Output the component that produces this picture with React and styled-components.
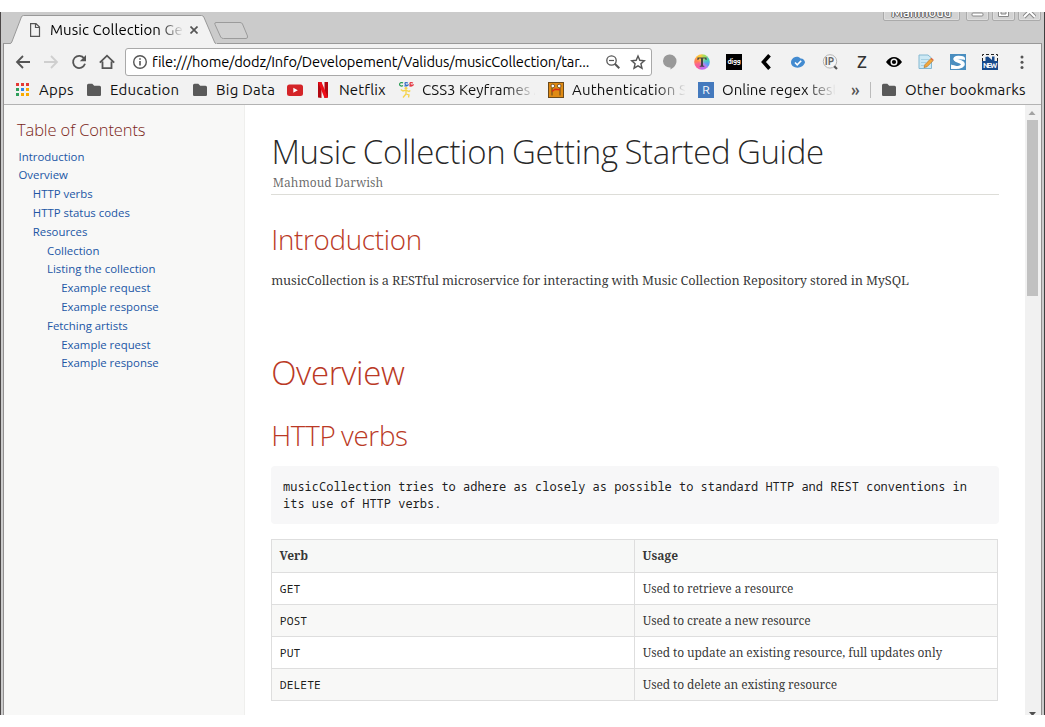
import React from "react";
import styled, { createGlobalStyle, css } from "styled-components";

const GlobalStyle = createGlobalStyle`
  *, *::before, *::after { box-sizing: border-box; }
  html, body { margin: 0; background: #fff; }
  h1, h2, h3, p, ul, pre { margin: 0; padding: 0; font-weight: inherit; }
`;

const ui = `"Ubuntu", "Noto Sans", sans-serif`;
const heading = `"Open Sans", "Noto Sans", sans-serif`;
const serif = `"Noto Serif", "DejaVu Serif", serif`;
const mono = `"Noto Sans Mono", "DejaVu Sans Mono", monospace`;

/* ---------- window ---------- */

const Screen = styled.div`
  width: 1045px;
  height: 727px;
  padding: 12px 0;
  overflow: hidden;
  background: #fff;
`;

const Window = styled.div`
  display: flex;
  flex-direction: column;
  height: 703px;
  overflow: hidden;
  background: #cbcbcb;
  border-left: 1px solid #4b4747;
  border-right: 1px solid #3f3f3f;
`;

const TabStrip = styled.header`
  display: flex;
  flex: none;
  height: 31px;
  padding: 0 4px 0 9px;
`;

const Tab = styled.div`
  position: relative;
  display: flex;
  align-items: center;
  width: 206px;
  height: 31px;
  padding: 4px 0 0 18px;
`;

const TabShape = styled.svg`
  position: absolute;
  left: 0;
  top: 0;
`;

const TabContent = styled.div`
  position: relative;
  display: flex;
  align-items: center;
`;

const TabTitle = styled.span`
  width: 133px;
  margin-left: 9px;
  overflow: hidden;
  white-space: nowrap;
  font: 15px/20px ${ui};
  letter-spacing: 0.05px;
  color: #000;
  mask-image: linear-gradient(to right, #000 108px, transparent 134px);
`;

const NewTab = styled.svg`
  margin: 9px 0 0 -3px;
`;

const WindowButtons = styled.div`
  display: flex;
  align-items: flex-start;
  gap: 4px;
  margin-left: auto;
  margin-top: -6px;
`;

const WindowButton = styled.div`
  display: flex;
  justify-content: center;
  align-items: center;
  width: ${(p) => (p.$wide ? 77 : 23)}px;
  margin-right: ${(p) => (p.$wide ? 2 : -1)}px;
  height: 15px;
  border: 1px solid #aaa;
  border-radius: 2px;
  background: #d3d3d3;
  box-shadow: inset 0 0 0 1px #dedede;
`;

const UserName = styled.span`
  font: 500 13px/13px ${ui};
  letter-spacing: 0;
  margin-top: -2px;
  color: #fff;
  text-shadow: 1px 0 #666, -1px 0 #666, 0 1px #666, 0 -1px #666;
`;

const Frame = styled.div`
  display: flex;
  flex-direction: column;
  flex: 1;
  min-height: 0;
  margin: 0 2px;
  border: 1px solid #929090;
  border-top-color: #999;
  border-bottom: 0;
  background: #f2f2f2;
`;

/* ---------- toolbar ---------- */

const Toolbar = styled.div`
  display: flex;
  align-items: center;
  flex: none;
  height: 36px;
  padding: 0 9px 0 11px;
`;

const NavButtons = styled.div`
  display: flex;
  gap: 12px;
  width: 110px;
`;

const AddressBar = styled.div`
  display: flex;
  align-items: center;
  width: 527px;
  height: 28px;
  padding: 0 5px 0 6px;
  border: 1px solid #a9a9a9;
  border-radius: 3px;
  background: #fff;
`;

const Url = styled.span`
  flex: 1;
  min-width: 0;
  margin-left: 4px;
  white-space: nowrap;
  font: 14.67px/20px ${ui};
  letter-spacing: -0.17px;
  color: #000;
`;

const AddressActions = styled.div`
  display: flex;
  gap: 9px;
`;

const Extensions = styled.div`
  display: flex;
  gap: 16px;
  margin-left: 10px;
`;

const Digg = styled.div`
  width: 16px;
  height: 16px;
  background: #000;
  color: #fff;
  text-align: center;
  font: 700 7px/14px ${ui};
  letter-spacing: -0.3px;
`;

const LetterZ = styled.div`
  width: 16px;
  height: 16px;
  text-align: center;
  color: #333;
  font: 500 17px/16px ${ui};
`;

/* ---------- bookmarks ---------- */

const Bookmarks = styled.nav`
  display: flex;
  align-items: center;
  flex: none;
  height: 25px;
  padding: 0 0 4px 11px;
  border-bottom: 1px solid #b3b3b3;
`;

const Bookmark = styled.div`
  display: flex;
  align-items: center;
  flex: none;
  gap: 8px;
  width: ${(p) => p.$width}px;
`;

const BookmarkLabel = styled.span`
  overflow: hidden;
  white-space: nowrap;
  font: 15px/20px ${ui};
  letter-spacing: ${(p) => p.$spacing || 0}px;
  color: #111;
  ${(p) =>
    p.$fade &&
    css`
      width: 113px;
      mask-image: linear-gradient(to right, #000 84px, transparent 114px);
    `}
`;

const More = styled.span`
  width: 19px;
  margin-top: -2px;
  font: 500 17px/17px ${ui};
  color: #555;
`;

const Separator = styled.span`
  width: 1px;
  height: 16px;
  margin-right: 10px;
  background: #bbb;
`;

const Regex = styled.div`
  width: 16px;
  height: 16px;
  flex: none;
  background: #4479bd;
  color: #fff;
  text-align: center;
  font: 12px/16px ${ui};
`;

/* ---------- document ---------- */

const Page = styled.div`
  display: flex;
  flex: 1;
  min-height: 0;
  overflow: hidden;
  background: #fff;
`;

const Sidebar = styled.aside`
  flex: none;
  width: 241px;
  padding: 15px 0 0 13px;
  border-right: 1px solid #efefed;
  background: #f8f8f7;
`;

const TocTitle = styled.h2`
  font: 300 16.5px/20px ${heading};
  letter-spacing: -0.12px;
  color: #7a2518;
`;

const TocList = styled.ul`
  padding: 7.55px 0 0;
  list-style: none;
`;

const TocItem = styled.li`
  padding-left: ${(p) => 1.5 + p.$level * 14.25}px;
  height: 18.8px;
  white-space: nowrap;
  font: 11.4px/18.8px ${heading};
  color: #2156a5;
`;

const Main = styled.main`
  flex: 1;
  padding: 24px 26px 0;
`;

const DocTitle = styled.h1`
  padding-left: 0.4px;
  font: 300 33px/46px ${heading};
  letter-spacing: -0.33px;
  word-spacing: -1.65px;
  white-space: nowrap;
  color: rgba(0, 0, 0, 0.85);
`;

const Author = styled.div`
  height: 20px;
  padding-left: 1.8px;
  border-bottom: 1px solid #ddddd8;
  font: 12px/16px ${serif};
  color: rgba(0, 0, 0, 0.6);
`;

const Heading = styled.h2`
  margin-top: ${(p) => p.$top}px;
  padding-left: 0.2px;
  font: 300 ${(p) => (p.$large ? 33 : 27.75)}px/40px ${heading};
  letter-spacing: -0.01em;
  word-spacing: -0.05em;
  color: #ba3925;
`;

const Paragraph = styled.p`
  margin-top: 11px;
  padding-left: 0.2px;
  font: 12.75px/20px ${serif};
  letter-spacing: -0.1275px;
  white-space: nowrap;
  color: rgba(0, 0, 0, 0.8);
`;

const Literal = styled.pre`
  height: 58px;
  margin-top: 11px;
  padding: 12px;
  border-radius: 4px;
  background: #f7f7f8;
  font: 12px/17px ${mono};
  color: rgba(0, 0, 0, 0.9);
`;

const Table = styled.table`
  width: 727px;
  margin-top: 15px;
  border-collapse: collapse;
  table-layout: fixed;
  font: 12px/16px ${serif};
  color: rgba(0, 0, 0, 0.8);
`;

const Row = styled.tr`
  height: ${(p) => (p.$head ? 33 : 32)}px;
  background: ${(p) => (p.$head ? "#f7f8f7" : p.$striped ? "#f8f8f7" : "#fff")};
`;

const Cell = styled.td`
  padding: 0 ${(p) => (p.$head ? 7.5 : 7.8)}px;
  border: 1px solid #dedede;
  font-weight: ${(p) => (p.$head ? 700 : 400)};
  text-align: left;
  white-space: nowrap;
  letter-spacing: ${(p) => (p.$head ? 0 : -0.12)}px;
`;

const Code = styled.code`
  font: 11.4px/16px ${mono};
  letter-spacing: 0;
  color: rgba(0, 0, 0, 0.9);
`;

const Scrollbar = styled.div`
  display: flex;
  flex-direction: column;
  align-items: center;
  flex: none;
  width: 16px;
  padding-right: 1px;
  background: #f1f1f1;
`;

const Thumb = styled.div`
  width: 11px;
  height: 176px;
  margin-bottom: auto;
  background: #c1c1c1;
`;

/* ---------- icons ---------- */

const Svg = styled.svg`
  flex: none;
  width: ${(p) => p.$w}px;
  height: ${(p) => p.$h}px;
  margin-left: ${(p) => p.$left || 0}px;
`;

const Icon = ({ w = 16, h = w, left, children }) => (
  <Svg $w={w} $h={h} $left={left} viewBox={`0 0 ${w} ${h}`} fill="none">
    {children}
  </Svg>
);

const FolderIcon = () => (
  <Icon>
    <path d="M1 3.2Q1 1.7 2.5 1.7H6.3L8.2 3.8H13.5Q15 3.8 15 5.3V13Q15 14 13.8 14H2.2Q1 14 1 13Z" fill="#5a5a5a" />
  </Icon>
);

const AppsIcon = () => (
  <Icon>
    {["#e53935", "#e53935", "#e53935", "#2f9e5b", "#2f86e8", "#f9ab00", "#2f9e5b", "#f9ab00", "#f9ab00"].map((c, i) => (
      <rect key={i} x={1 + (i % 3) * 5} y={1 + Math.floor(i / 3) * 5} width="3" height="3" fill={c} />
    ))}
  </Icon>
);

const stroke = { stroke: "#555", strokeWidth: 1.8 };

const toc = [
  [0, "Introduction"],
  [0, "Overview"],
  [1, "HTTP verbs"],
  [1, "HTTP status codes"],
  [1, "Resources"],
  [2, "Collection"],
  [2, "Listing the collection"],
  [3, "Example request"],
  [3, "Example response"],
  [2, "Fetching artists"],
  [3, "Example request"],
  [3, "Example response"],
];

const verbs = [
  ["GET", "Used to retrieve a resource"],
  ["POST", "Used to create a new resource"],
  ["PUT", "Used to update an existing resource, full updates only"],
  ["DELETE", "Used to delete an existing resource"],
];

const tabOutline = "M0 31.5Q1.2 31.5 1.8 30L11.4 5Q12.1 3.5 13.5 3.5H191.5Q193 3.5 193.8 5L204.5 30Q205 31.5 206 31.5";

function Tabs() {
  return (
    <TabStrip>
      <Tab>
        <TabShape width="207" height="33" viewBox="0 0 207 33">
          <path d={`${tabOutline}H207V33H0Z`} fill="#f2f2f2" />
          <path d={tabOutline} fill="none" stroke="#999" />
        </TabShape>
        <TabContent>
          <Icon w={12} h={14} left={1}>
            <path d="M1.6 .6H7L10.5 4V13.4H1.6ZM6.5 .6V4.5H10.5" stroke="#555" strokeWidth="1.2" />
          </Icon>
          <TabTitle>Music Collection Getting</TabTitle>
          <Icon w={8} left={7}>
            <path d="M.5.5 7.5 7.5M7.5.5.5 7.5" stroke="#555" strokeWidth="1.7" />
          </Icon>
        </TabContent>
      </Tab>
      <NewTab width="36" height="19" viewBox="0 0 36 19">
        <path d="M3 1.5H27Q28.8 1.5 29.5 3L34.5 15Q35 17.5 33 17.5H10.5Q8.5 17.5 7.7 16L2 3.5Q1.2 1.5 3 1.5Z" fill="#d0d0d0" stroke="#9b9b9b" />
      </NewTab>
      <WindowButtons>
        <WindowButton $wide>
          <UserName>Mahmoud</UserName>
        </WindowButton>
        <WindowButton>
          <Icon w={13}><rect x="1" y="6" width="11" height="3" rx="1" fill="#fff" stroke="#888" /></Icon>
        </WindowButton>
        <WindowButton>
          <Icon w={13}><path d="M1.5 0V9.5H11.5V0H9V7H4V0Z" fill="#fff" stroke="#888" /></Icon>
        </WindowButton>
        <WindowButton>
          <Icon w={13}><path d="M1 10 6.5 4.5 12 10" stroke="#888" strokeWidth="4" /><path d="M1 10 6.5 4.5 12 10" stroke="#fff" strokeWidth="2" /></Icon>
        </WindowButton>
      </WindowButtons>
    </TabStrip>
  );
}

function ToolbarRow() {
  return (
    <Toolbar>
      <NavButtons>
        <Icon><path d="M15 8H2.5M8 2 2 8l6 6" {...stroke} /></Icon>
        <Icon><path d="M1 8H13.5M8 2l6 6-6 6" stroke="#cfcfcf" strokeWidth="1.8" /></Icon>
        <Icon>
          <path d="M13.2 4.4A6.1 6.1 0 1 0 14 9.8" {...stroke} />
          <path d="M15 1V7.2H8.8Z" fill="#555" />
        </Icon>
        <Icon><path d="M.8 8.7 8 1.7l7.2 7M3.5 7.5V14.1H12.5V7.5" {...stroke} /></Icon>
      </NavButtons>
      <AddressBar>
        <Icon>
          <circle cx="8" cy="8" r="6.3" stroke="#555" strokeWidth="1.4" />
          <path d="M8 7V11.5M8 4.2V5.8" stroke="#555" strokeWidth="1.6" />
        </Icon>
        <Url>file:///home/dodz/Info/Developement/Validus/musicCollection/tar...</Url>
        <AddressActions>
          <Icon>
            <circle cx="6.5" cy="6.5" r="4.7" stroke="#555" strokeWidth="1.3" />
            <path d="M4 6.5H9" stroke="#555" strokeWidth="1.2" />
            <path d="M9.8 9.8 14.3 14.3" stroke="#555" strokeWidth="2" />
          </Icon>
          <Icon><path d="M8 2 9.8 6.3 14.3 6.7 10.9 9.7 12 14.2 8 11.8 4 14.2 5.1 9.7 1.7 6.7 6.2 6.3Z" stroke="#555" strokeWidth="1.4" /></Icon>
        </AddressActions>
      </AddressBar>
      <Extensions>
        <Icon><path d="M8 .5A6.5 6.5 0 0 1 14.5 7C14.5 11 11.5 14 8.5 15.5V13.4A6.5 6.5 0 1 1 8 .5Z" fill="#999" /></Icon>
        <Icon>
          <defs>
            <clipPath id="disc"><circle cx="8" cy="8" r="7.8" /></clipPath>
            <filter id="soft"><feGaussianBlur stdDeviation="1" /></filter>
          </defs>
          <g clipPath="url(#disc)">
            <g filter="url(#soft)">
              <path d="M8 8V-4H20Z" fill="#a5dd55" />
              <path d="M8 8 20-4V10Z" fill="#48d0b0" />
              <path d="M8 8 20 8V20Z" fill="#5b9cf4" />
              <path d="M8 8 20 20H2Z" fill="#c56bec" />
              <path d="M8 8 4 20H-4V8Z" fill="#f85f9a" />
              <path d="M8 8-4 11V-1Z" fill="#ff8055" />
              <path d="M8 8-4 0V-4H8Z" fill="#ffc63d" />
            </g>
          </g>
          <path d="M3.4 3.4H12.6V6H11.7L11 4.6H9V11.6L10.3 12V12.8H5.7V12L7 11.6V4.6H5L4.3 6H3.4Z" fill="#444" />
        </Icon>
        <Digg>digg</Digg>
        <Icon><path d="M11.5 1.2 5.5 8l6 6.8" stroke="#000" strokeWidth="3.6" /></Icon>
        <Icon>
          <path d="M3.5 3.8C6 2 9 2.3 10.5 4.5 13 4.3 15 6.3 15 8.5 14 11.5 11 13.7 7.5 13.7 4 13.7 1 11.5 1 8.5 1 6.5 2 4.8 3.5 3.8Z" fill="#438bd0" />
          <path d="M5 8.5 7.2 10.8 11.2 6.7" stroke="#fff" strokeWidth="1.6" />
        </Icon>
        <Icon>
          <circle cx="8" cy="7.4" r="6.7" fill="#f6f6f6" stroke="#b5b5b5" />
          <path d="M12.2 12.2 15 15" stroke="#555" strokeWidth="2.2" />
          <text x="2.8" y="11" fontSize="10" fontWeight="700" fontFamily="Ubuntu, sans-serif" fill="#666">IP</text>
        </Icon>
        <LetterZ>Z</LetterZ>
        <Icon>
          <path d="M0 8Q3.5 3 8 3T16 8Q12.5 13 8 13T0 8Z" fill="#000" />
          <circle cx="8" cy="8" r="3.5" fill="#f2f2f2" />
          <circle cx="8" cy="8" r="2.1" fill="#000" />
        </Icon>
        <Icon>
          <path d="M1 1H10L13.5 4V14.5H1Z" fill="#cde9f5" stroke="#85b9d2" />
          <path d="M3 5.5H11M3 8.5H8M3 11.5H6" stroke="#a7d0e2" />
          <path d="M6 13.6 6.8 10.8 12.8 4.6 15 6.8 9 12.8Z" fill="#f3a83c" stroke="#a56b2a" strokeWidth=".6" />
          <path d="M12.8 4.6 13.6 3.8 15.8 6 15 6.8Z" fill="#e4633f" />
        </Icon>
        <Icon>
          <rect x=".5" y=".5" width="15" height="15" fill="#f4f9fc" stroke="#4a8ec0" />
          <path d="M1 1H15V3.5C11 1.8 3.5 1.6 3.5 5 3.5 8.5 11.5 7.6 11.5 10.4 11.5 12.6 5 12.4 1 10.5Z" fill="#4a8ec0" />
          <path d="M15 6C12 5 8 5.4 7.6 4.9 11 6 15.3 7 14.8 10.6 14.3 14 9 15 6 15H15Z" fill="#4a8ec0" />
          <path d="M13.5 4C11 2.7 4.8 2.3 4.8 5 4.8 7.8 12.3 7.3 12.3 10.6 12.3 14 4.5 13.7 1.8 12.2" stroke="#fff" strokeWidth="2.7" />
        </Icon>
        <Icon>
          <path d="M.5 7V.5H15.5V7" stroke="#222" strokeDasharray="3 2" />
          <path d="M3.5 7V3L6 2.5 10 6V2.5H12.5V7Z" fill="#174a8c" />
          <rect y="7" width="16" height="9" fill="#174a8c" />
          <text x=".9" y="14" fontSize="7.4" fontWeight="700" fontFamily="Ubuntu, sans-serif" fill="#fff" textLength="14.2">NEW</text>
        </Icon>
        <Icon>
          <circle cx="8" cy="3" r="1.5" fill="#555" />
          <circle cx="8" cy="8.3" r="1.5" fill="#555" />
          <circle cx="8" cy="13.6" r="1.5" fill="#555" />
        </Icon>
      </Extensions>
    </Toolbar>
  );
}

function BookmarksRow() {
  return (
    <Bookmarks>
      <Bookmark $width={71}><AppsIcon /><BookmarkLabel $spacing={0.2}>Apps</BookmarkLabel></Bookmark>
      <Bookmark $width={106}><FolderIcon /><BookmarkLabel $spacing={0.25}>Education</BookmarkLabel></Bookmark>
      <Bookmark $width={95}><FolderIcon /><BookmarkLabel $spacing={0.25}>Big Data</BookmarkLabel></Bookmark>
      <Bookmark $width={28}>
        <Icon>
          <rect x="0" y="2.5" width="16" height="11.5" rx="2.5" fill="#d42428" />
          <path d="M6.3 5.8V10.7L10.8 8.2Z" fill="#fff" />
        </Icon>
      </Bookmark>
      <Bookmark $width={83}>
        <Icon>
          <path d="M3 0H6.5V16L3 15.5ZM9.5 0H13V15.5L9.5 16Z" fill="#b20710" />
          <path d="M3 0H6.5L13 15.5 9.5 16Z" fill="#ee0d18" />
        </Icon>
        <BookmarkLabel $spacing={0.15}>Netflix</BookmarkLabel>
      </Bookmark>
      <Bookmark $width={150}>
        <Icon>
          <path d="M5 1A2.1 1.7 0 1 0 5 3.6" stroke="#2b9b55" strokeWidth="1.2" />
          <path d="M10 1Q6.8 0 7 1.8T9.7 3.2Q8.2 4.5 6.3 3.7" stroke="#356bc4" strokeWidth="1.2" />
          <path d="M15 1Q11.8 0 12 1.8T14.7 3.2Q13.2 4.5 11.3 3.7" stroke="#e53945" strokeWidth="1.3" />
          <circle cx="8" cy="6.3" r="1.4" fill="#f5d34a" />
          <path d="M2.8 7.5 5 9 8 8.2 11 9.6 12.3 8.6M8 8V12L5 15.5M8 12 11 13 10.5 15.5" stroke="#f5d34a" strokeWidth="1.3" />
        </Icon>
        <BookmarkLabel $fade>CSS3 Keyframes Animation</BookmarkLabel>
      </Bookmark>
      <Bookmark $width={150}>
        <Icon>
          <rect x=".5" y=".5" width="15" height="15" fill="#e08a12" stroke="#6b4a1c" />
          <circle cx="4.8" cy="4" r="1.8" fill="#fff" stroke="#5d4422" strokeWidth=".8" />
          <circle cx="11.2" cy="4" r="1.8" fill="#fff" stroke="#5d4422" strokeWidth=".8" />
          <path d="M4 6V13.5M12 6V13.5" stroke="#5c4420" strokeWidth="1" />
          <path d="M4 9.5 7 7.2 12 7.8" stroke="#d92b12" strokeWidth="1.5" />
        </Icon>
        <BookmarkLabel $fade $spacing={0.2}>Authentication Server</BookmarkLabel>
      </Bookmark>
      <Bookmark $width={153}><Regex>R</Regex><BookmarkLabel $fade>Online regex tester</BookmarkLabel></Bookmark>
      <More>»</More>
      <Separator />
      <Bookmark $width={150}><FolderIcon /><BookmarkLabel $spacing={0.2}>Other bookmarks</BookmarkLabel></Bookmark>
    </Bookmarks>
  );
}

export default function App() {
  return (
    <Screen>
      <GlobalStyle />
      <Window>
        <Tabs />
        <Frame>
          <ToolbarRow />
          <BookmarksRow />
          <Page>
            <Sidebar>
              <TocTitle>Table of Contents</TocTitle>
              <TocList>
                {toc.map(([level, text], i) => (
                  <TocItem key={i} $level={level}>{text}</TocItem>
                ))}
              </TocList>
            </Sidebar>
            <Main>
              <DocTitle>Music Collection Getting Started Guide</DocTitle>
              <Author>Mahmoud Darwish</Author>
              <Heading $top={24}>Introduction</Heading>
              <Paragraph>
                musicCollection is a RESTful microservice for interacting with Music Collection Repository stored in MySQL
              </Paragraph>
              <Heading $large $top={63}>Overview</Heading>
              <Heading $top={22}>HTTP verbs</Heading>
              <Literal>{`musicCollection tries to adhere as closely as possible to standard HTTP and REST conventions in\nits use of HTTP verbs.`}</Literal>
              <Table>
                <thead>
                  <Row $head>
                    <Cell as="th" $head>Verb</Cell>
                    <Cell as="th" $head>Usage</Cell>
                  </Row>
                </thead>
                <tbody>
                  {verbs.map(([verb, usage], i) => (
                    <Row key={verb} $striped={i % 2 === 1}>
                      <Cell><Code>{verb}</Code></Cell>
                      <Cell>{usage}</Cell>
                    </Row>
                  ))}
                </tbody>
              </Table>
            </Main>
            <Scrollbar>
              <Icon w={15}><path d="M3.5 10H10.5L7 6Z" fill="#a3a3a3" /></Icon>
              <Thumb />
              <Icon w={15} h={4}><path d="M4 1H11L7.5 5Z" fill="#505050" /></Icon>
            </Scrollbar>
          </Page>
        </Frame>
      </Window>
    </Screen>
  );
}
